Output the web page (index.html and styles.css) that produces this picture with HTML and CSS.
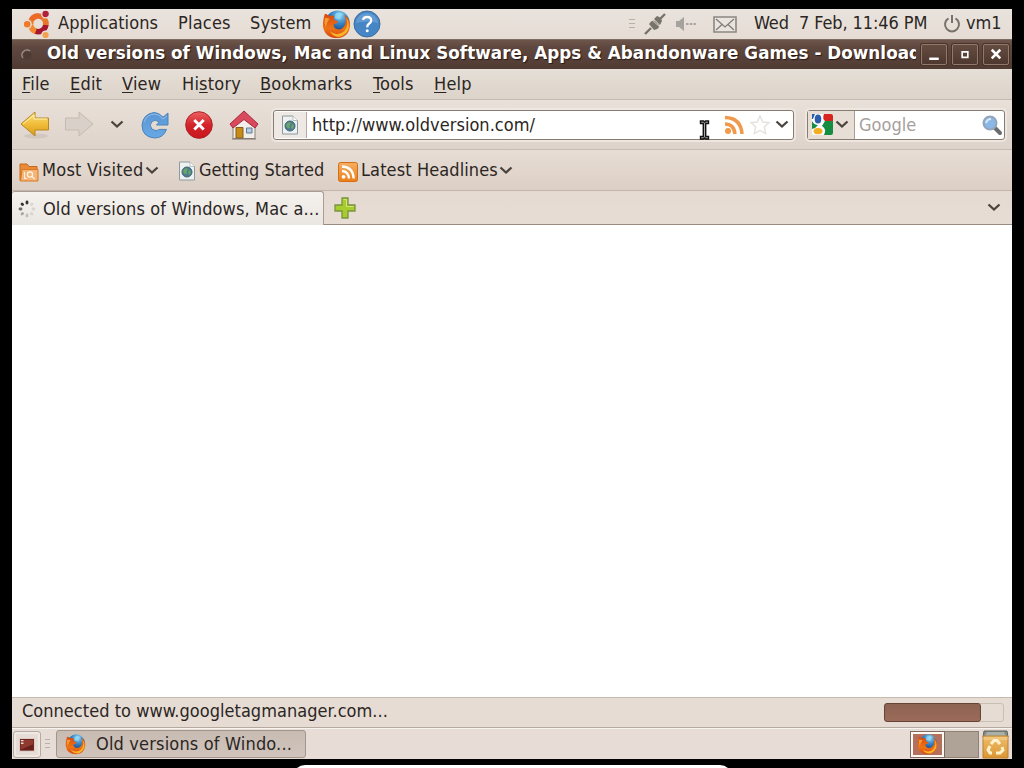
FILE: index.html
```html
<!DOCTYPE html>
<html lang="en">
<head>
<meta charset="utf-8">
<title>Desktop</title>
<link rel="stylesheet" href="styles.css">
</head>
<body>
<svg width="0" height="0" class="defs">
  <defs>
    <linearGradient id="fox" x1="0" y1="0" x2="0" y2="1"><stop offset="0" stop-color="#d8480f"/><stop offset=".6" stop-color="#ed7416"/><stop offset="1" stop-color="#d84510"/></linearGradient>
    <radialGradient id="globe" cx=".6" cy=".2" r=".8"><stop offset="0" stop-color="#8bd6f4"/><stop offset=".45" stop-color="#3582c4"/><stop offset="1" stop-color="#17275f"/></radialGradient>
    <linearGradient id="gold" x1="0" y1="0" x2="0" y2="1"><stop offset="0" stop-color="#fbe48a"/><stop offset=".5" stop-color="#f1bd3a"/><stop offset="1" stop-color="#d99a18"/></linearGradient>
    <linearGradient id="blue" x1="0" y1="0" x2="0" y2="1"><stop offset="0" stop-color="#5b96d4"/><stop offset="1" stop-color="#68a8e6"/></linearGradient>
    <linearGradient id="red" x1="0" y1="0" x2="0" y2="1"><stop offset="0" stop-color="#ed6262"/><stop offset=".5" stop-color="#d2242a"/><stop offset="1" stop-color="#c9161d"/></linearGradient>
    <linearGradient id="orange" x1="0" y1="0" x2="0" y2="1"><stop offset="0" stop-color="#f3b064"/><stop offset="1" stop-color="#ed7e17"/></linearGradient>
    <linearGradient id="box" x1="0" y1="0" x2="0" y2="1"><stop offset="0" stop-color="#eebd6c"/><stop offset="1" stop-color="#dc9632"/></linearGradient>
    <symbol id="firefox" viewBox="0 0 30 30">
      <circle cx="16" cy="13" r="12.5" fill="url(#globe)"/>
      <path d="M14 4Q19 1 22 5Q18 6 20 9Q16 11 13 8Z" fill="#9bddf3" opacity=".7"/>
      <path d="M3 4Q5 4 7 6Q10 5 13 7Q11 9 14 11L17 12Q16 14 12 15Q12 19 16 20Q21 21 24 15Q25 9 23 5Q29 9 29 16Q28 28 16 29Q3 29 1 17Q1 9 3 4Z" fill="url(#fox)"/>
      <path d="M24 7Q29 15 23 22Q16 28 8 22Q13 30 21 27Q30 22 27 11Z" fill="#f9b52a"/>
      <path d="M3 8Q2 13 4 18Q5 12 8 9Z" fill="#f69a35"/>
    </symbol>
    <symbol id="chev" viewBox="0 0 14 9"><path d="M1.5 1.5L7 6.5L12.5 1.5" fill="none" stroke="#4a433e" stroke-width="2.3"/></symbol>
    <symbol id="page" viewBox="0 0 18 20">
      <path d="M1.5 1H12L16.5 5.5V19H1.5Z" fill="#eef1f0" stroke="#8b9a9c"/>
      <path d="M12 1V5.5H16.5" fill="#fff" stroke="#a5b0b1" stroke-width=".8"/>
      <circle cx="9" cy="11" r="5" fill="#4d7a91" stroke="#3d6673"/>
      <path d="M5 10Q7 6 10 8Q8 11 9 13Q6 14 5 10M11 9L13 10L12 14L10 13Z" fill="#68a66a"/>
    </symbol>
  </defs>
</svg>
<div class="screen">
  <header class="panel top">
    <svg class="ubuntu" viewBox="0 0 28 28">
      <g fill="none" stroke-width="5.6">
        <path d="M8.2 10.4A7.7 7.7 0 0 1 20.6 8.2" stroke="#ec6a26"/>
        <path d="M20.6 8.2A7.7 7.7 0 0 1 22.8 15.5" stroke="#e8772b"/>
        <path d="M22.8 15A7.7 7.7 0 0 1 12 21" stroke="#a6162e"/>
        <path d="M12.8 21.4A7.7 7.7 0 0 1 7.6 15" stroke="#f28a34"/>
        <path d="M7.6 15A7.7 7.7 0 0 1 8.4 10.2" stroke="#ef7a28"/>
      </g>
      <g stroke="#e7e0d9" stroke-width="1.4"><circle cx="4.2" cy="14.2" r="4" fill="#ef7a28"/><circle cx="22.6" cy="4" r="3.9" fill="#b01f3c"/><circle cx="22.6" cy="25" r="3.8" fill="#f5a04c"/></g>
    </svg>
    <span class="t apps">Applications</span><span class="t places">Places</span><span class="t system">System</span>
    <svg class="ff30"><use href="#firefox"/></svg>
    <svg class="help" viewBox="0 0 28 28"><circle cx="14" cy="14" r="13" fill="#4686c5" stroke="#3c6f9f"/><path d="M3 13A11 10 0 0 1 25 13Q14 10 3 13" fill="#76a8d8" opacity=".6"/><path d="M9.8 9.7Q11 7 14 7Q18.2 7 18.2 10.5Q18.2 12.3 16 13.8Q14.2 15 14.2 17.2" fill="none" stroke="#fff" stroke-width="2.3"/><circle cx="14.2" cy="20.8" r="1.5" fill="#fff"/></svg>
    <div class="tray">
      <svg width="6" height="12" viewBox="0 0 6 12"><path d="M0 1.5H6M0 5.5H6M0 9.5H6" stroke="#b9b0a7"/></svg>
      <svg class="plug" viewBox="0 0 22 22"><path d="M1 21L7 15M15 7L21 1" stroke="#777269" stroke-width="2.4"/><path d="M5 11Q8 6 11 8L15 12Q16 16 10 17Z" fill="#77736b"/><path d="M10 6L13 3Q17 4 18 8L16 12Z" fill="#77736b"/><path d="M8 7L16 14" stroke="#d8d2c8" stroke-width="1"/></svg>
      <svg class="sound" viewBox="0 0 20 16"><path d="M0 5H3L8 1V15L3 11H0Z" fill="#a6a29d"/><path d="M10 8H20" stroke="#aaa5a0" stroke-width="1.8" stroke-dasharray="2.5 1.2"/></svg>
      <svg class="mail" viewBox="0 0 24 17"><path d="M1 1H23V16H1Z" fill="#e9e4df" stroke="#8c8780" stroke-width="1.6"/><path d="M3 3L12 11L21 3M3 14L9 8.5M21 14L15 8.5" fill="none" stroke="#827d76" stroke-width="1.3"/></svg>
      <span class="t clock">Wed&nbsp; 7 Feb, 11:46 PM</span>
      <svg class="power" viewBox="0 0 18 18"><path d="M5.5 3.4A7 7 0 1 0 12.5 3.4" fill="none" stroke="#77736c" stroke-width="2"/><path d="M9 0V8" stroke="#77736c" stroke-width="2"/></svg>
      <span class="t vm">vm1</span>
    </div>
  </header>
  <div class="titlebar">
    <svg class="dot" viewBox="0 0 12 12"><path d="M2 9A5 5 0 0 1 9 2" fill="none" stroke="#a4938a" stroke-width="1.2"/><circle cx="6.5" cy="6.5" r="4" fill="#4e3b34"/></svg>
    <h1 class="t title">Old versions of Windows, Mac and Linux Software, Apps &amp; Abandonware Games - Download</h1>
    <div class="controls">
      <i><svg viewBox="0 0 24 20"><path d="M7 14.5H17" stroke="#fff" stroke-width="2.6"/></svg></i>
      <i><svg viewBox="0 0 24 20"><path d="M9 7.2H15V13H9Z" fill="none" stroke="#fff" stroke-width="1.7"/></svg></i>
      <i><svg viewBox="0 0 24 20"><path d="M7.5 5L16.5 14M16.5 5L7.5 14" stroke="#fff" stroke-width="2.7"/></svg></i>
    </div>
  </div>
  <nav class="menubar">
    <span class="t m-file"><u>F</u>ile</span><span class="t m-edit"><u>E</u>dit</span><span class="t m-view"><u>V</u>iew</span><span class="t m-history">Hi<u>s</u>tory</span><span class="t m-bookmarks"><u>B</u>ookmarks</span><span class="t m-tools"><u>T</u>ools</span><span class="t m-help"><u>H</u>elp</span>
  </nav>
  <div class="navbar">
    <svg class="back" viewBox="0 0 30 28"><ellipse cx="16" cy="25" rx="12" ry="2.5" fill="#a99c8f" opacity=".25"/><path d="M1 13L15 1V7H28.5V19H15V25Z" fill="url(#gold)" stroke="#b98720" stroke-linejoin="round"/><path d="M3 13L14 4V8H27" fill="none" stroke="#fff1b0"/></svg>
    <svg class="forward" viewBox="0 0 30 28"><path d="M29 13L15 1V7H1.5V19H15V25Z" fill="#d9d1c9" stroke="#c4bbb2" stroke-linejoin="round"/></svg>
    <svg class="chev"><use href="#chev"/></svg>
    <svg class="reload" viewBox="0 0 28 28"><path d="M22 6.2L27 2V14H15.5L18.2 11Q14 7.8 10.8 10.6Q7.8 14.2 10.8 18Q15 21.2 19 18.4H25.5Q22.5 27 13.5 27Q1 26 1 14Q2 3 13 1.5Q18 1.5 22 6.2Z" fill="url(#blue)" stroke="#4c83b9"/><path d="M3 11Q6 3 14 3Q18 3 22 8L26 5" fill="none" stroke="#a4c8ed" stroke-width=".8"/></svg>
    <svg class="stop" viewBox="0 0 28 28"><circle cx="14" cy="14" r="13.3" fill="url(#red)" stroke="#ab2428"/><path d="M9.3 9L18.7 18.5M18.7 9L9.3 18.5" stroke="#fff" stroke-width="3"/></svg>
    <svg class="home" viewBox="0 0 30 30"><path d="M4 16L15 6L26 16V28.5H4Z" fill="#f2efeb" stroke="#89827d"/><path d="M15 1L29 14L26 18L15 9.5L4 18L1 14Z" fill="#d84a5c" stroke="#a52b3d" stroke-linejoin="round"/><path d="M7 17.5H14V28H7Z" fill="#c88b16" stroke="#845e1b"/><path d="M17.5 18H23V23H17.5Z" fill="#b4cde4" stroke="#627b91"/><path d="M3 29H27" stroke="#82776e" stroke-width="1"/></svg>
    <div class="field address">
      <div class="site"><svg class="page"><use href="#page"/></svg></div>
      <span class="t url">http://www.oldversion.com/</span>
      <svg class="feed" viewBox="0 0 20 20"><circle cx="4" cy="16" r="3" fill="#f29a45"/><path d="M1 9Q10 9 11 19M1 2.5Q17 3 18 19" fill="none" stroke="#f0994b" stroke-width="3.5"/></svg>
      <svg class="star" viewBox="0 0 20 20"><path d="M10 1L12.7 7L19 7.6L14.3 12L15.7 18.5L10 15.2L4.3 18.5L5.7 12L1 7.6L7.3 7Z" fill="#fff" stroke="#e4e1df" stroke-width="1.4"/></svg>
      <svg class="chev"><use href="#chev"/></svg>
    </div>
    <div class="field search">
      <div class="engine">
        <svg class="google" viewBox="0 0 21 21"><rect width="21" height="21" rx="2" fill="#fff"/><path d="M12 0H19Q21 0 21 2V7H13Q10 5 12 0Z" fill="#d9251f"/><path d="M13 7H21V19Q21 21 19 21H12Q15 15 10 12Z" fill="#168b42"/><path d="M0 7Q2 11 6 11Q4 14 0 15Z" fill="#168b42"/><path d="M0 0H3L1 5H0Z" fill="#2b5cac"/><ellipse cx="6" cy="5" rx="3.3" ry="4.5" fill="#2b5cac"/><ellipse cx="6" cy="17.2" rx="4.4" ry="3.1" fill="#f0ae20"/></svg>
        <svg class="chev"><use href="#chev"/></svg>
      </div>
      <span class="t ph">Google</span>
      <svg class="glass" viewBox="0 0 20 20"><path d="M13 13L18 18" stroke="#6b6c6e" stroke-width="4" stroke-linecap="round"/><circle cx="8" cy="8" r="6.5" fill="#8ab7e5" stroke="#93a6b9" stroke-width="2"/><path d="M4 8Q5 4 9 4" fill="none" stroke="#d8ebfb" stroke-width="2"/></svg>
    </div>
  </div>
  <div class="bookmarks">
    <svg class="folder" viewBox="0 0 20 20"><path d="M1 18.5V2H8L10 4.5H18V18.5Z" fill="#e98b38" stroke="#c66819"/><path d="M3 7.5H19V19H1.5Z" fill="#f4b478" stroke="#d97922"/><circle cx="11" cy="12.6" r="2.6" fill="none" stroke="#fff1df" stroke-width="1.3"/><path d="M13 14.5L16 17.3M5.5 10V16.5H8" fill="none" stroke="#fff1df" stroke-width="1.1"/></svg>
    <span class="t b-most">Most Visited</span><svg class="chev"><use href="#chev"/></svg>
    <svg class="page bpage"><use href="#page"/></svg>
    <span class="t b-start">Getting Started</span>
    <svg class="rss" viewBox="0 0 20 20"><rect x=".5" y=".5" width="19" height="19" rx="2" fill="url(#orange)" stroke="#d46d13"/><circle cx="5.6" cy="14.8" r="1.9" fill="#fff"/><path d="M4 9Q10.5 9.5 11 16.5M4 4.5Q15 5 15.7 16.5" fill="none" stroke="#fff" stroke-width="2.3"/></svg>
    <span class="t b-news">Latest Headlines</span><svg class="chev"><use href="#chev"/></svg>
  </div>
  <div class="tabs">
    <div class="tab"><svg class="spin" viewBox="0 0 18 18"><g stroke-width="2.8" stroke-linecap="round"><path d="M9 2V3M4 4L4.6 4.6" stroke="#353230"/><path d="M2 9H3" stroke="#6f6a66"/><path d="M4 14L4.6 13.4" stroke="#aaa5a0"/><path d="M9 15V16" stroke="#c3bfbb"/><path d="M13.4 13.4L14 14M15 9H16M13.4 4.6L14 4" stroke="#d8d4d0"/></g></svg><span class="t tabtext">Old versions of Windows, Mac a...</span></div>
    <svg class="plus" viewBox="0 0 22 22"><path d="M8 1H14V8H21V14H14V21H8V14H1V8H8Z" fill="#a7cc2e" stroke="#7a943b" stroke-width="1.3"/><path d="M9.5 2.5H12.5V9.5H19.5" fill="none" stroke="#d2e879"/></svg>
    <svg class="chev"><use href="#chev"/></svg>
  </div>
  <main class="content"></main>
  <div class="status"><span class="t statustext">Connected to www.googletagmanager.com...</span><div class="progress"><div class="bar"></div></div></div>
  <footer class="panel bottom">
    <div class="show"><svg viewBox="0 0 18 16"><path d="M.5 .5H17.5V15H.5Z" fill="#68201b" stroke="#e8ddd7"/><path d="M2 2H16V7L2 13Z" fill="#8f3930"/><path d="M2 3H5M2 6H5" stroke="#e9d8d0" stroke-width="1.6"/></svg></div>
    <svg class="grip" viewBox="0 0 6 12"><path d="M0 1.5H5M0 5.5H5M0 9.5H5" stroke="#b9b0a7"/></svg>
    <div class="task"><svg class="ff21"><use href="#firefox"/></svg><span class="t tasktext">Old versions of Windo...</span></div>
    <div class="workspaces"><div class="ws active"><svg class="ff21"><use href="#firefox"/></svg></div><div class="ws"></div></div>
    <svg class="trash" viewBox="0 0 27 28"><path d="M2 1H25L26 7H1Z" fill="#858a83" stroke="#5f625c"/><path d="M5 2H22L24 6H3Z" fill="#a9b0aa"/><path d="M1 6H26V28H1Z" fill="url(#box)" stroke="#bd802e"/><path d="M1.5 7H25.5V10H1.5Z" fill="#f2cf8f" opacity=".6"/><g fill="none" stroke="#fff0ce" stroke-width="3"><path d="M9 14L12 10.5H15L18 14"/><path d="M20 17L21 20L18 23H14"/><path d="M10 23H8L6 20L8 16"/></g></svg>
  </footer>
  <svg class="cursor" viewBox="0 0 10 20"><path d="M1 1H4L5 2L6 1H9V3.5H6.2V16.5H9V19H6L5 18L4 19H1V16.5H3.8V3.5H1Z" fill="#aaa" stroke="#111" stroke-width="1.4"/></svg>
</div>
<div class="sheet"></div>
</body>
</html>
```
FILE: styles.css
```css
* { box-sizing: border-box; }
body { margin: 0; width: 1024px; height: 768px; overflow: hidden; background: #000; padding: 9px 12px 0; position: relative; font: 18px "DejaVu Sans Condensed", "DejaVu Sans", sans-serif; font-stretch: condensed; color: #2b2623; }
svg { display: block; flex: none; overflow: visible; }
.defs { position: absolute; }
.screen { width: 1000px; height: 750px; display: flex; flex-direction: column; background: #e6dcd3; }
.screen > * { flex: none; }
.t { white-space: nowrap; flex: none; line-height: 22px; }
u { text-decoration-thickness: 1px; text-underline-offset: 2px; }

.panel { display: flex; align-items: center; background: linear-gradient(#e9e3dd, #e5dcd4); }
.top { height: 30px; padding-left: 11px; }
.ubuntu { width: 28px; height: 28px; margin-right: 7px; }
.apps { width: 120px; letter-spacing: .1px; }
.places { width: 72px; letter-spacing: .2px; }
.system { width: 72px; letter-spacing: .2px; }
.ff30 { width: 29px; height: 29px; }
.help { width: 28px; height: 28px; margin-left: 2px; }
.top .t { margin-top: -2px; }
.tray { flex: 1; display: flex; align-items: center; justify-content: flex-end; padding-right: 10px; }
.plug { width: 22px; height: 22px; margin-left: 9px; }
.sound { width: 20px; height: 16px; margin-left: 10px; }
.mail { width: 24px; height: 17px; margin-left: 17px; }
.clock { width: 174px; margin-left: 17px; letter-spacing: -.1px; }
.power { width: 18px; height: 18px; margin: 0 5px 0 15px; }
.vm { width: 36px; }

.titlebar { height: 30px; display: flex; align-items: center; background: linear-gradient(#6e564c, #5e473e 25%, #503b33); border-top: 1px solid #806b60; padding-left: 9px; }
.dot { width: 12px; height: 12px; }
.title { margin: -3px 0 0 14px; width: 869px; overflow: hidden; font-family: "DejaVu Sans", sans-serif; font-stretch: normal; font-size: 16.8px; letter-spacing: .04px; font-weight: bold; color: #fff; text-shadow: 1px 1px 1px #251914; }
.controls { display: flex; gap: 5px; margin-left: 5px; }
.controls i { width: 26px; height: 21px; border: 1px solid #92796c; border-radius: 2px; background: linear-gradient(#644c41, #4e382f); box-shadow: 0 0 0 1px #493229; }
.controls svg { width: 24px; height: 19px; }

.menubar { height: 31px; padding: 0 0 1px 10px; display: flex; align-items: center; background: linear-gradient(#e6dfd7, #dcd3c9); border-bottom: 1px solid #c6bbb1; letter-spacing: .2px; }
.m-file { width: 48px; } .m-edit { width: 52px; } .m-view { width: 60px; } .m-history { width: 78px; } .m-bookmarks { width: 113px; } .m-tools { width: 61px; }

.navbar { height: 50px; padding-left: 8px; display: flex; align-items: center; background: linear-gradient(#e9e0d9, #ddd3ca); border-bottom: 1px solid #c8bcb2; }
.back { width: 30px; height: 28px; }
.forward { width: 30px; height: 28px; margin-left: 14px; }
.chev { width: 14px; height: 9px; }
.navbar > .chev { margin-left: 16px; }
.reload { width: 28px; height: 28px; margin-left: 17px; }
.stop { width: 28px; height: 28px; margin-left: 16px; }
.home { width: 30px; height: 30px; margin-left: 16px; }
.field { height: 30px; display: flex; align-items: center; background: #fff; border: 1px solid #887b70; border-radius: 3px; box-shadow: 0 0 0 2px #eee7e1; }
.address { width: 521px; margin-left: 14px; }
.site { width: 33px; height: 26px; padding: 3px 7px; background: #eee9e5; border-right: 1px solid #b6aaa0; margin-right: 5px; }
.page { width: 18px; height: 20px; }
.url, .ph { margin-top: 1px; letter-spacing: .04px; }
.feed { width: 20px; height: 20px; margin-left: auto; }
.star { width: 20px; height: 20px; margin-left: 6px; }
.address .chev { margin: 0 4px 0 5px; }
.search { width: 198px; margin-left: 13px; }
.engine { height: 28px; width: 47px; padding-left: 4px; display: flex; align-items: center; gap: 2px; border-right: 1px solid #a99c91; background: #e7ded6; }
.google { width: 21px; height: 21px; }
.ph { color: #a6a09b; margin-left: 4px; }
.glass { width: 20px; height: 20px; margin: 0 2px 0 auto; }

.bookmarks { height: 41px; padding-left: 7px; display: flex; align-items: center; background: linear-gradient(#e7ddd5, #dccfc5); border-bottom: 1px solid #c3b5aa; }
.folder, .rss { width: 20px; height: 20px; margin-top: 3px; }
.b-most { width: 103px; margin-left: 3px; letter-spacing: .25px; }
.bpage { margin: 2px 0 0 19px; }
.b-start { width: 124px; margin-left: 3px; }
.rss { margin-left: 15px; }
.b-news { width: 138px; margin-left: 3px; letter-spacing: .1px; }

.tabs { height: 34px; display: flex; align-items: center; background: linear-gradient(#e4dad1, #e8ddd4); border-bottom: 1px solid #998b80; }
.tab { width: 312px; height: 34px; padding-left: 6px; display: flex; align-items: center; background: linear-gradient(#f5f1ed, #eae6e2); border: 1px solid #aa9d92; border-bottom: 0; border-left: 0; border-radius: 3px 3px 0 0; align-self: flex-start; }
.spin { width: 18px; height: 18px; margin-right: 7px; }
.tabtext { letter-spacing: .13px; }
.plus { width: 22px; height: 22px; margin-left: 10px; }
.tabs > .chev { margin: 0 11px 0 auto; }
.content { height: 472px; background: #fff; }

.status { height: 31px; padding: 0 8px 3px 10px; display: flex; align-items: center; justify-content: space-between; border-top: 1px solid #c5baaf; border-bottom: 1px solid #b6aaa0; background: #e6dcd4; letter-spacing: .03px; }
.progress { width: 120px; height: 19px; margin-top: 3px; border: 1px solid #cabfb5; border-radius: 3px; }
.bar { width: 97px; height: 19px; margin: -1px; border: 1px solid #664335; border-radius: 3px; background: linear-gradient(#8c6252, #9c6b5a); }
.bottom { height: 31px; border-top: 1px solid #f7f3ef; padding-left: 1px; background: #e7ddd6; }
.show { width: 28px; height: 27px; padding: 6px 4px; border: 1px solid #b5aaa1; border-radius: 3px; box-shadow: inset 0 0 0 2px #efe9e3; }
.show svg { width: 18px; height: 14px; }
.grip { width: 6px; height: 12px; margin: 0 5px 0 4px; }
.task { width: 250px; height: 28px; padding-left: 8px; display: flex; align-items: center; background: linear-gradient(#c7bbb2, #d0c4bc); border: 1px solid #a2958b; border-radius: 3px; }
.ff21 { width: 21px; height: 21px; }
.tasktext { margin-left: 10px; letter-spacing: .17px; }
.workspaces { display: flex; width: 69px; height: 27px; margin-left: auto; border: 1px solid #8e8176; background: #afa297; }
.ws { flex: 1; }
.active { flex: 0 0 33px; background: #b2705d; border: 2px solid #fff9f2; outline: 1px solid #7c6b61; padding: 0 0 0 4px; }
.trash { width: 27px; height: 28px; margin: 0 3px 0 3px; }
.cursor { position: absolute; left: 699px; top: 120px; width: 11px; height: 20px; }
.sheet { position: absolute; left: 293px; top: 765px; width: 439px; height: 15px; background: #fff; border-radius: 12px 12px 0 0; }
```
